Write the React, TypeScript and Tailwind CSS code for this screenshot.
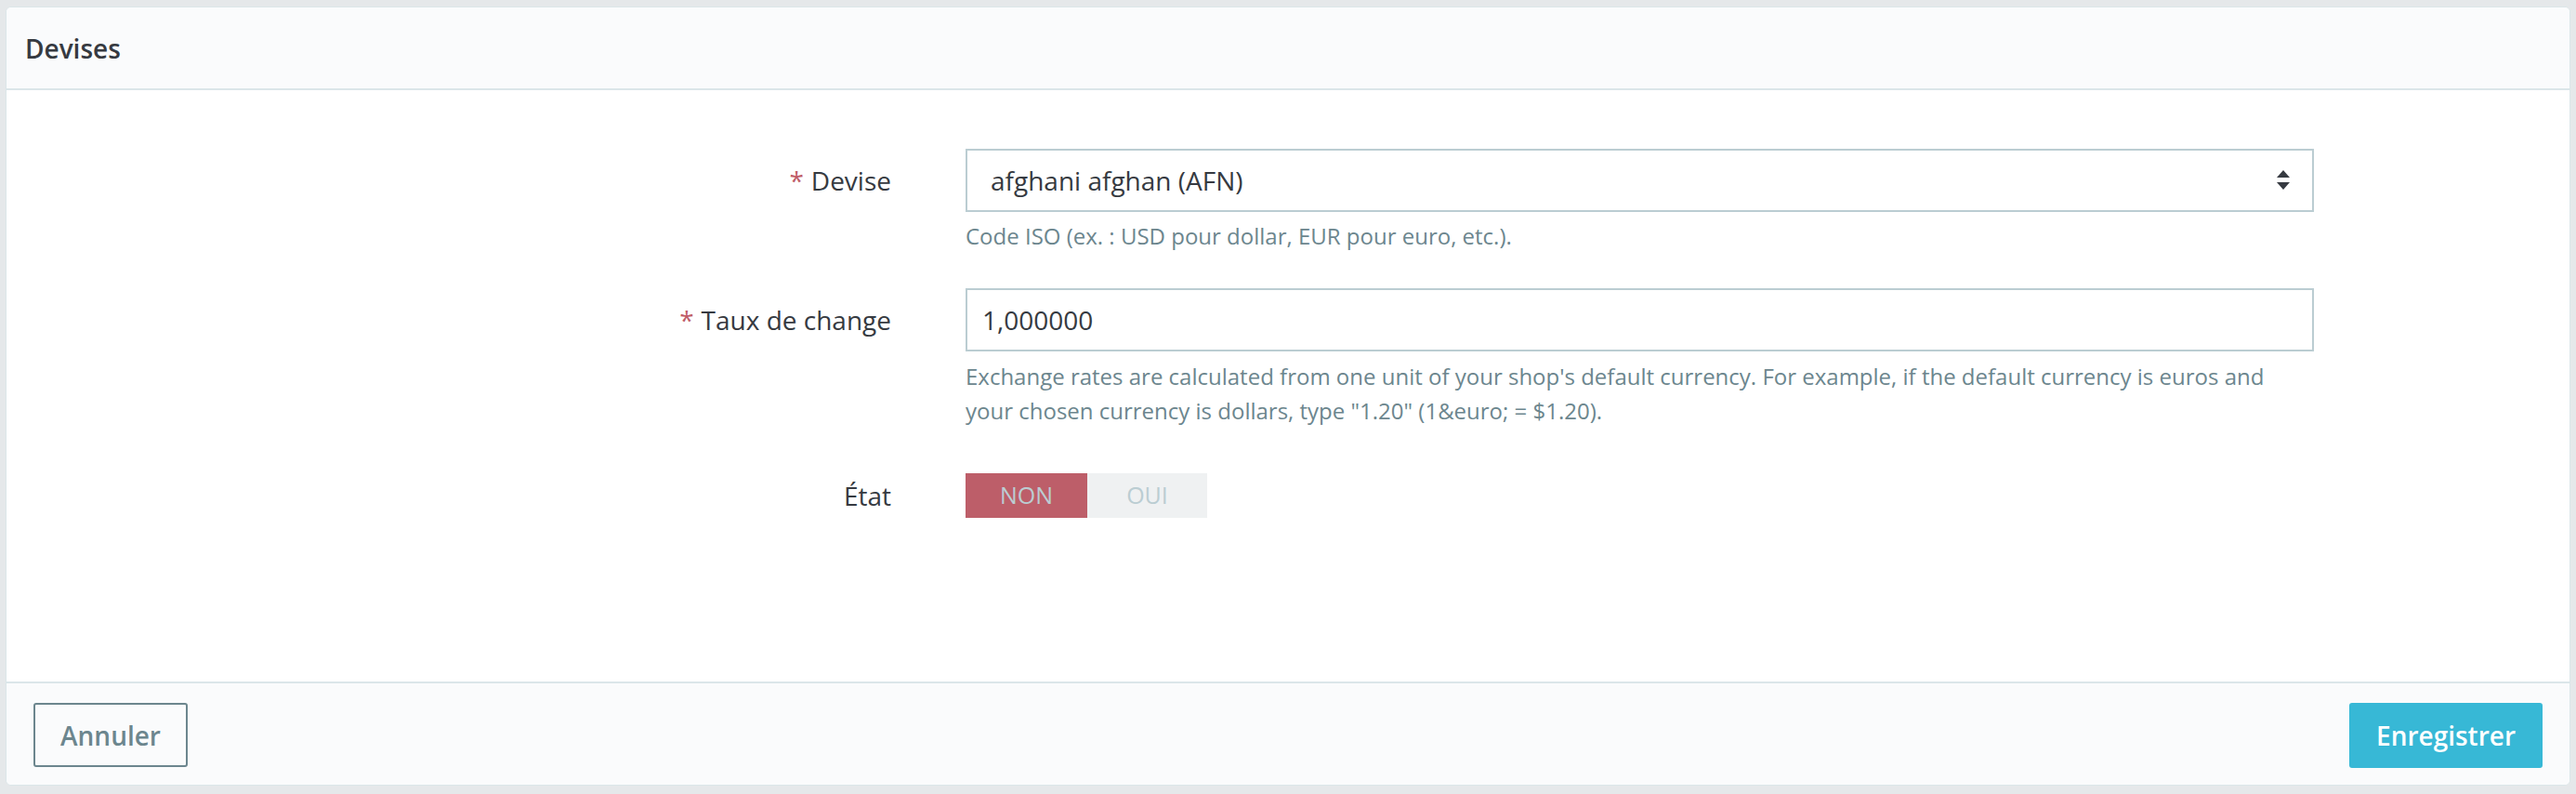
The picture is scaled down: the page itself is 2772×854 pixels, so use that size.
export default function App() {
  const font = { fontFamily: '"Open Sans", "Noto Sans", sans-serif' };

  return (
    <div className="min-h-screen w-full bg-[#e5e8ea] px-[6px] pt-[7px] pb-[9px]" style={font}>
      <div className="flex h-[838px] flex-col overflow-hidden rounded-[6px] border border-[#dbe6e9] bg-white">
        {/* Header */}
        <div className="flex h-[89px] shrink-0 items-center border-b-2 border-[#dbe6e9] bg-[#fafbfc] px-[20px]">
          <h3 className="text-[28px] font-semibold text-[#363a41]">Devises</h3>
        </div>

        {/* Body */}
        <div className="flex-1 pt-[63px]">
          {/* Devise */}
          <div className="grid grid-cols-[952px_1451px] gap-x-[80px]">
            <label className="flex h-[68px] items-center justify-end text-[28px] text-[#363a41]">
              <span className="mr-[8px] text-[#c05c67]">*</span>Devise
            </label>
            <div>
              <div className="flex h-[68px] items-center justify-between border-2 border-[#bbcdd2] bg-white pl-[25px] pr-[24px] text-[28px] text-[#363a41]">
                <span>afghani afghan (AFN)</span>
                <svg width="14" height="22" viewBox="0 0 14 22" className="fill-[#363a41]">
                  <polygon points="7,0 14,8 0,8" />
                  <polygon points="0,13 14,13 7,21" />
                </svg>
              </div>
              <p className="mt-[9px] text-[24px] leading-[34px] text-[#6c868e]">
                Code ISO (ex. : USD pour dollar, EUR pour euro, etc.).
              </p>
            </div>
          </div>

          {/* Taux de change */}
          <div className="mt-[39px] grid grid-cols-[952px_1451px] gap-x-[80px]">
            <label className="flex h-[68px] items-center justify-end text-[28px] text-[#363a41]">
              <span className="mr-[8px] text-[#c05c67]">*</span>Taux de change
            </label>
            <div>
              <div className="flex h-[68px] items-center border-2 border-[#bbcdd2] bg-white px-[16px] text-[28px] text-[#363a41]">
                1,000000
              </div>
              <p className="mt-[8px] pr-[10px] text-[24px] leading-[37px] text-[#6c868e]">
                Exchange rates are calculated from one unit of your shop's default currency. For example, if the default currency is euros and your chosen currency is dollars, type "1.20" (1&amp;euro; = $1.20).
              </p>
            </div>
          </div>

          {/* État */}
          <div className="mt-[49px] grid grid-cols-[952px_1451px] gap-x-[80px]">
            <label className="flex h-[48px] items-center justify-end text-[28px] text-[#363a41]">
              État
            </label>
            <div className="flex h-[48px] w-[260px] text-[25px] uppercase text-[#bbcdd2]">
              <span className="flex w-[131px] items-center justify-center bg-[#bd5e69]">NON</span>
              <span className="flex flex-1 items-center justify-center bg-[#eff1f2]">OUI</span>
            </div>
          </div>
        </div>

        {/* Footer */}
        <div className="flex h-[111px] shrink-0 items-start justify-between border-t-2 border-[#dbe6e9] bg-[#fafbfc] px-[29px] pt-[21px]">
          <button className="h-[69px] w-[166px] rounded-[3px] border-2 border-[#6c868e] text-[28px] font-semibold text-[#6c868e]">
            Annuler
          </button>
          <button className="h-[70px] w-[208px] rounded-[3px] bg-[#37b8d6] text-[28px] font-semibold text-white">
            Enregistrer
          </button>
        </div>
      </div>
    </div>
  );
}
